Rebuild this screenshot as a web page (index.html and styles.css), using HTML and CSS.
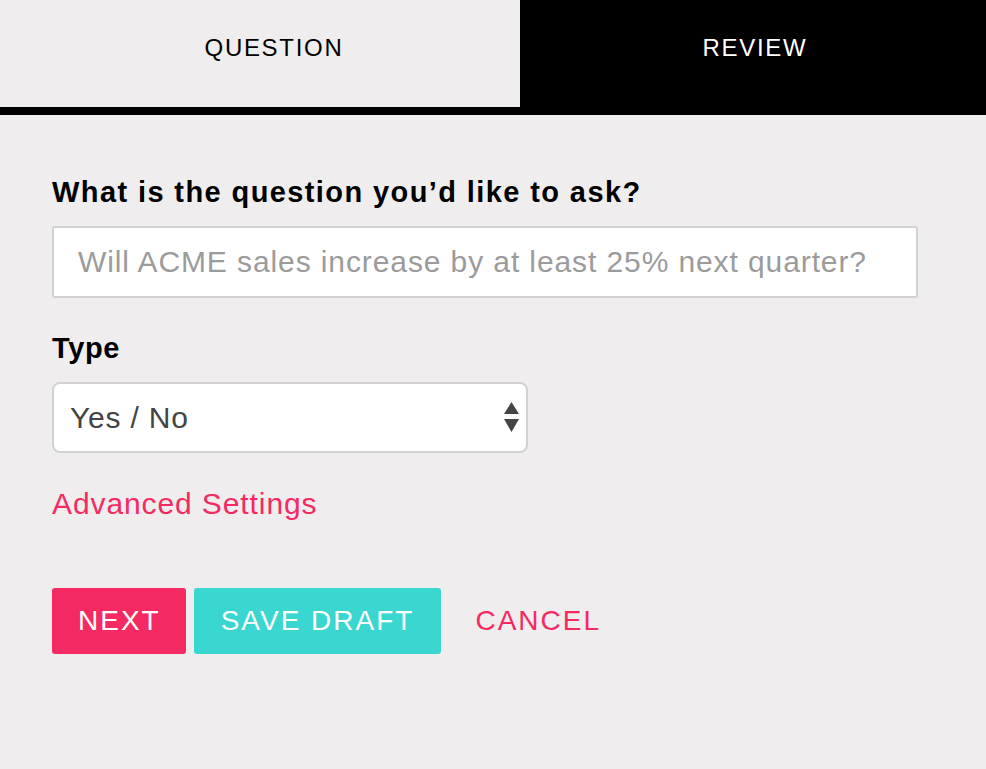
FILE: index.html
```html
<!DOCTYPE html>
<html lang="en">
<head>
<meta charset="utf-8">
<title>Question</title>
<link rel="stylesheet" href="styles.css">
</head>
<body>
<nav class="tabs">
  <div class="tab tab-active">QUESTION</div>
  <div class="tab tab-dark">REVIEW</div>
</nav>
<main class="form">
  <label class="label label-first" for="q">What is the question you’d like to ask?</label>
  <input id="q" class="text-input" type="text" placeholder="Will ACME sales increase by at least 25% next quarter?">
  <label class="label label-type" for="t">Type</label>
  <div class="select-wrap">
    <select id="t" class="select"><option>Yes / No</option></select>
    <svg class="select-arrows" width="15" height="30" viewBox="0 0 15 30"><path d="M7.5 0 L15 12 L0 12 Z M0 17 L15 17 L7.5 30 Z" fill="#444"/></svg>
  </div>
  <a class="advanced" href="#">Advanced Settings</a>
  <div class="actions">
    <button class="btn btn-next">NEXT</button>
    <button class="btn btn-save">SAVE DRAFT</button>
    <button class="btn btn-cancel">CANCEL</button>
  </div>
</main>
</body>
</html>
```
FILE: styles.css
```css
html, body {
  margin: 0;
  padding: 0;
  background: #efeded;
  font-family: "Liberation Sans", Arial, Helvetica, sans-serif;
}
.tabs {
  display: flex;
  height: 107px;
  border-bottom: 8px solid #000;
}
.tab {
  display: flex;
  align-items: center;
  justify-content: center;
  font-size: 24px;
  letter-spacing: 1.7px;
  padding-bottom: 11px;
  box-sizing: border-box;
}
.tab-active {
  width: 520px;
  padding-left: 28px;
  background: #efeded;
  color: #000;
}
.tab-dark {
  flex: 1;
  padding-left: 4px;
  background: #000;
  color: #fff;
}
.form {
  padding: 0 52px;
  display: flex;
  flex-direction: column;
  align-items: flex-start;
}
.label {
  font-weight: bold;
  font-size: 29px;
  line-height: 34px;
  letter-spacing: 1.4px;
  color: #000;
}
.label-first {
  margin-top: 60px;
}
.label-type {
  margin-top: 33px;
  letter-spacing: 0.6px;
}
.text-input {
  margin-top: 17px;
  width: 866px;
  height: 72px;
  box-sizing: border-box;
  border: 2px solid #d2d2d2;
  border-radius: 3px;
  background: #fff;
  padding: 0 24px;
  font-family: inherit;
  font-size: 30px;
  letter-spacing: 0.9px;
  color: #333;
  outline: none;
}
.text-input::placeholder {
  color: #9b9b9b;
}
.select-wrap {
  position: relative;
  margin-top: 17px;
}
.select {
  display: block;
  appearance: none;
  -webkit-appearance: none;
  width: 476px;
  height: 71px;
  box-sizing: border-box;
  border: 2px solid #d2d2d2;
  border-radius: 8px;
  background: #fff;
  padding: 0 16px;
  font-family: inherit;
  font-size: 30px;
  letter-spacing: 0.8px;
  color: #444;
  outline: none;
}
.select-arrows {
  position: absolute;
  right: 9px;
  top: 20px;
}
.advanced {
  margin-top: 34px;
  color: #f52a63;
  font-size: 30px;
  line-height: 34px;
  letter-spacing: 0.9px;
  text-decoration: none;
}
.actions {
  margin-top: 67px;
  display: flex;
  gap: 8px;
}
.btn {
  height: 66px;
  border: none;
  border-radius: 3px;
  font-family: inherit;
  font-size: 28px;
  letter-spacing: 2px;
  color: #fff;
  padding: 0 25px 0 26px;
  cursor: pointer;
}
.btn-next {
  background: #f52a63;
}
.btn-save {
  background: #3ad6d0;
  padding: 0 27px 0 27px;
}
.btn-cancel {
  background: transparent;
  color: #f52a63;
  padding: 0 26px 0 26px;
}
```
